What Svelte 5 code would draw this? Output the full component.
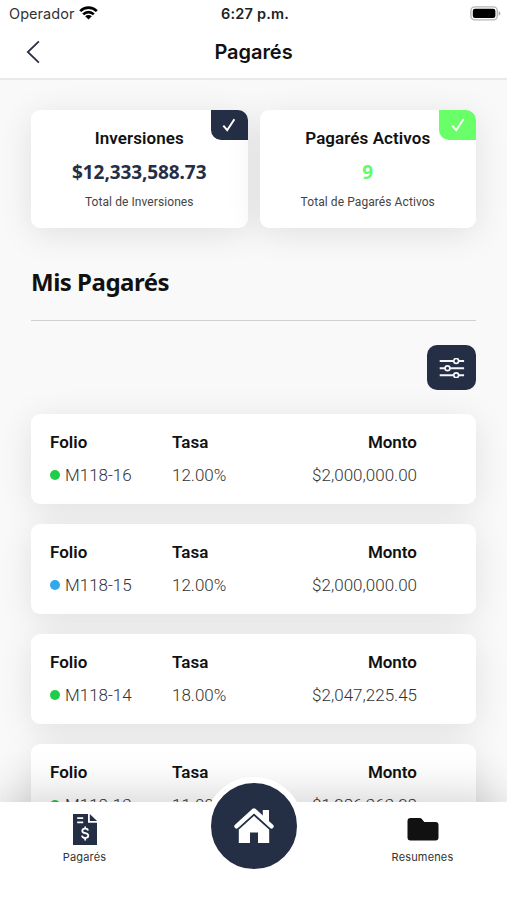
<script lang="ts">
  type Status = "green" | "blue";

  interface Note {
    folio: string;
    rate: string;
    amount: string;
    status: Status;
  }

  const summaries = [
    { title: "Inversiones", value: "$12,333,588.73", caption: "Total de Inversiones", tone: "navy" },
    { title: "Pagarés Activos", value: "9", caption: "Total de Pagarés Activos", tone: "lime" },
  ];

  const notes: Note[] = [
    { folio: "M118-16", rate: "12.00%", amount: "$2,000,000.00", status: "green" },
    { folio: "M118-15", rate: "12.00%", amount: "$2,000,000.00", status: "blue" },
    { folio: "M118-14", rate: "18.00%", amount: "$2,047,225.45", status: "green" },
    { folio: "M118-13", rate: "11.00%", amount: "$1,286,363.28", status: "green" },
  ];
</script>

<div class="screen">
  <header>
    <div class="status-bar">
      <div class="carrier">
        <span>Operador</span>
        <svg width="19" height="14" viewBox="0 0 19 14">
          <g fill="none" stroke="#000" stroke-width="2.7">
            <path d="M1.2 5.1a11.8 11.8 0 0 1 16.6 0" />
            <path d="M4.2 8.4a7.5 7.5 0 0 1 10.6 0" />
          </g>
          <path d="M9.5 13.6 6.2 10.3a4.7 4.7 0 0 1 6.6 0z" />
        </svg>
      </div>
      <span class="time">6:27 p.m.</span>
      <svg class="battery" width="31" height="15" viewBox="0 0 31 15">
        <rect x=".9" y=".9" width="26.4" height="13" rx="4" fill="#fff" stroke="#b5b5b5" stroke-width="1.4" />
        <rect x="2.8" y="2.8" width="22.6" height="9.2" rx="2.3" />
        <path d="M28.7 5.2q1.7.5 1.7 2.2t-1.7 2.2z" fill="#aaa" />
      </svg>
    </div>
    <div class="title-bar">
      <button class="back" aria-label="Volver">
        <svg width="14" height="24" viewBox="0 0 14 24">
          <path d="M12.9 1.4 1.8 12l11.1 10.6" fill="none" stroke="#2a3045" stroke-width="1.8" />
        </svg>
      </button>
      <h1>Pagarés</h1>
      <span></span>
    </div>
  </header>

  <main>
    <section class="summaries">
      {#each summaries as item}
        <article class="summary {item.tone}">
          <div class="check">
            <svg width="14" height="14" viewBox="0 0 14 14">
              <path d="m1.3 7.6 3.9 4.6L12.4 1.2" fill="none" stroke="#fff" stroke-width="2" />
            </svg>
          </div>
          <h3>{item.title}</h3>
          <strong>{item.value}</strong>
          <p>{item.caption}</p>
        </article>
      {/each}
    </section>

    <h2>Mis Pagarés</h2>

    <button class="filter" aria-label="Filtrar">
      <svg width="26" height="20" viewBox="0 0 26 20">
        <g fill="none" stroke="#f4f6fa" stroke-width="2">
          <path d="M.7 2.9h14M19.7 2.9h5.4M.7 10.2h5.3M11 10.2h14.1M.7 17.2h14M19.7 17.2h5.4" />
          <circle cx="17.2" cy="2.9" r="2.4" stroke-width="1.7" />
          <circle cx="8.5" cy="10.2" r="2.4" stroke-width="1.7" />
          <circle cx="17.2" cy="17.2" r="2.4" stroke-width="1.7" />
        </g>
      </svg>
    </button>

    <section class="notes">
      {#each notes as note}
        <article class="note">
          <div>
            <h4>Folio</h4>
            <p class="folio"><i class={note.status}></i>{note.folio}</p>
          </div>
          <div>
            <h4>Tasa</h4>
            <p>{note.rate}</p>
          </div>
          <div class="amount">
            <h4>Monto</h4>
            <p>{note.amount}</p>
          </div>
        </article>
      {/each}
    </section>
  </main>

  <nav>
    <button class="tab">
      <svg width="24" height="31" viewBox="0 0 24 31">
        <path d="M0 0h15v8.7h9V31H0z" fill="#242e45" />
        <path d="M16.8 0 24 7.1h-7.2z" fill="#242e45" />
        <path d="M4.2 4.2h6M4.2 8.4h6" stroke="#fff" stroke-width="1.7" />
        <path
          d="M15.1 16.5c-.3-1.2-1.3-1.8-2.9-1.8-1.8 0-2.9.8-2.9 2.2 0 3.1 6 1.5 6 4.6 0 1.5-1.2 2.4-3.1 2.4-1.8 0-3-.8-3.2-2.3M12.2 12.5v2.2M12.2 23.9v2.5"
          fill="none"
          stroke="#fff"
          stroke-width="1.8"
        />
      </svg>
      <span>Pagarés</span>
    </button>
    <button class="home" aria-label="Inicio">
      <svg width="40" height="36" viewBox="0 0 40 36">
        <path d="M2.5 18.3 20 2.5l17.5 15.8" fill="none" stroke="#fff" stroke-width="4.4" stroke-linecap="round" stroke-linejoin="round" />
        <path d="M28.8 2H35v13l-6.2-5.6z" fill="#fff" />
        <path d="M4.8 20.6 20 7l15.2 13.6V35H24V24.4h-8V35H4.8z" fill="#fff" />
        <path d="M4.2 21.3 20 7l15.8 14.3" fill="none" stroke="#242e45" stroke-width="1.3" />
      </svg>
    </button>
    <button class="tab">
      <svg width="32" height="31" viewBox="0 0 32 31">
        <path d="M.5 7q0-3 3-3H13q1 0 1.6.8L17.3 8H28.5q3 0 3 3v12.5q0 3-3 3h-25q-3 0-3-3z" fill="#111" />
      </svg>
      <span>Resumenes</span>
    </button>
  </nav>
</div>

<style>
  :global(body) {
    margin: 0;
  }

  h1,
  h2,
  h3,
  h4,
  p {
    margin: 0;
  }

  button {
    padding: 0;
    border: 0;
    background: none;
    font: inherit;
  }

  svg {
    display: block;
  }

  .screen {
    display: flex;
    flex-direction: column;
    width: 507px;
    height: 900px;
    overflow: hidden;
    background: #f9f9f9;
    color: #111;
    font-family: Roboto, sans-serif;
  }

  header {
    box-sizing: border-box;
    flex: none;
    height: 80px;
    border-bottom: 2px solid #e9e9e9;
    background: #fff;
    font-family: Inter, sans-serif;
  }

  .status-bar {
    display: grid;
    grid-template-columns: 1fr auto 1fr;
    align-items: center;
    height: 27px;
    padding: 0 6px 0 9px;
    font-size: 14.5px;
  }

  .carrier {
    display: flex;
    align-items: center;
    gap: 5px;
    color: #333;
    letter-spacing: 0.05px;
  }

  .carrier svg {
    margin-top: -1px;
  }

  .time {
    color: #222;
    font-weight: 600;
    letter-spacing: 0.2px;
  }

  .battery {
    justify-self: end;
  }

  .title-bar {
    display: grid;
    grid-template-columns: 1fr auto 1fr;
    align-items: center;
    height: 50px;
    padding: 0 26px;
  }

  .back {
    justify-self: start;
  }

  h1 {
    font-size: 20px;
    font-weight: 600;
    letter-spacing: -0.05px;
  }

  main {
    display: flex;
    flex: 1;
    flex-direction: column;
    min-height: 0;
    padding: 30px 31px 0;
  }

  .summaries {
    display: grid;
    flex: none;
    grid-template-columns: 1fr 1fr;
    gap: 12px;
  }

  .summary {
    position: relative;
    box-sizing: border-box;
    height: 118px;
    padding-top: 17px;
    border-radius: 9px;
    background: #fff;
    box-shadow: 0 6px 34px rgba(0, 0, 0, 0.1);
    text-align: center;
  }

  .check {
    position: absolute;
    top: 0;
    right: 0;
    display: flex;
    align-items: center;
    justify-content: center;
    width: 37px;
    height: 30px;
    border-radius: 0 10px 0 10px;
    background: #242e45;
  }

  .lime .check {
    background: #68ff68;
  }

  h3 {
    font-size: 17px;
    font-weight: 600;
    line-height: 23px;
    letter-spacing: 0.07px;
  }

  strong {
    display: block;
    margin-top: 9px;
    color: #242e45;
    font-family: "Noto Sans", sans-serif;
    font-size: 19px;
    font-weight: 700;
    line-height: 26px;
    letter-spacing: -0.1px;
  }

  .lime strong {
    color: #68f968;
  }

  .summary p {
    margin-top: 9px;
    color: #444;
    font-size: 12px;
    line-height: 16px;
    letter-spacing: 0.08px;
  }

  h2 {
    flex: none;
    box-sizing: border-box;
    height: 92.5px;
    padding-top: 36px;
    border-bottom: 1.5px solid #d0d0d0;
    font-family: "Noto Sans", sans-serif;
    font-size: 24px;
    font-weight: 700;
    line-height: 36px;
    letter-spacing: -0.5px;
  }

  .filter {
    display: flex;
    flex: none;
    align-items: center;
    align-self: flex-end;
    justify-content: center;
    width: 49px;
    height: 45px;
    margin-top: 24.5px;
    border-radius: 10px;
    background: #242e45;
  }

  .notes {
    display: flex;
    flex-direction: column;
    gap: 20px;
    margin-top: 24.4px;
  }

  .note {
    display: grid;
    flex: none;
    grid-template-columns: 122px 100px 1fr;
    box-sizing: border-box;
    height: 89.9px;
    padding: 17px 59px 0 19px;
    border-radius: 9px;
    background: #fff;
    box-shadow: 0 6px 34px rgba(0, 0, 0, 0.1);
  }

  h4 {
    font-size: 17px;
    font-weight: 600;
    line-height: 23px;
  }

  .note p {
    margin-top: 9px;
    color: #333;
    font-size: 17px;
    font-weight: 300;
    line-height: 24px;
  }

  .note .folio {
    display: flex;
    align-items: center;
    gap: 5px;
  }

  .folio i {
    width: 10px;
    height: 10px;
    border-radius: 50%;
  }

  .green {
    background: #20cd48;
  }

  .blue {
    background: #32a9ef;
  }

  .amount {
    text-align: right;
  }

  nav {
    position: relative;
    display: grid;
    flex: none;
    grid-template-columns: 169px 169px 169px;
    height: 98px;
    background: #fff;
    box-shadow: 0 0 50px rgba(0, 0, 0, 0.22);
  }

  .tab {
    display: flex;
    flex-direction: column;
    align-items: center;
    padding-top: 12px;
    color: #333;
    font-family: Inter, sans-serif;
    font-size: 11px;
    line-height: 16px;
    letter-spacing: 0.15px;
  }

  .tab span {
    margin-top: 4px;
  }

  .home {
    display: flex;
    align-items: center;
    justify-content: center;
    justify-self: center;
    box-sizing: content-box;
    width: 86px;
    height: 86px;
    margin-top: -25px;
    border: 6px solid #fff;
    border-radius: 50%;
    background: #242e45;
  }
</style>
